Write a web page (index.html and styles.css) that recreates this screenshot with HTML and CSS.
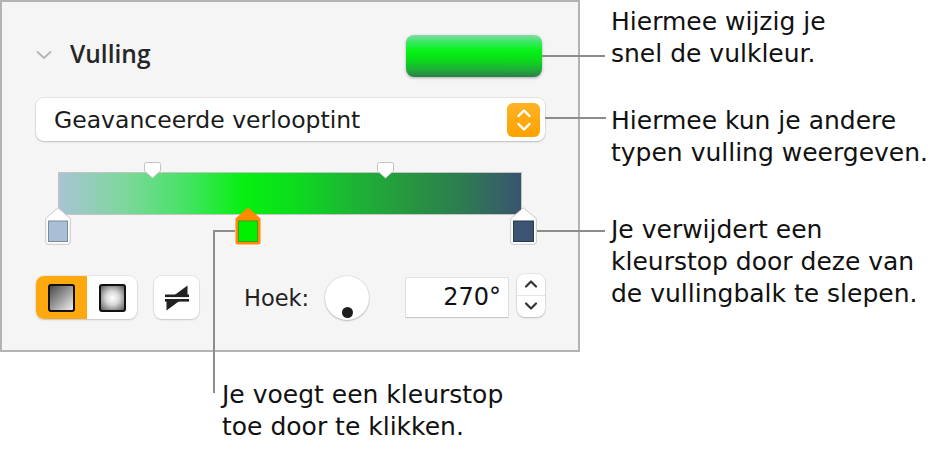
FILE: index.html
```html
<!DOCTYPE html>
<html lang="nl">
<head>
    <meta charset="UTF-8">
    <meta name="viewport" content="width=device-width, initial-scale=1.0">
    <title>Vulling</title>
    <link rel="stylesheet" href="styles.css">
</head>
<body>
    <div class="figure">
        <div class="top-row">
            <!-- Inspector panel -->
            <div class="panel">
                <div class="header">
                    <svg class="chev" width="16" height="10" viewBox="0 0 16 10"><polyline points="1.5,2 8,8 14.5,2" fill="none" stroke="#b5b5b5" stroke-width="1.8" stroke-linecap="round" stroke-linejoin="round"/></svg>
                    <span class="title">Vulling</span>
                    <div class="well"></div>
                </div>

                <div class="select">
                    <span class="select-label">Geavanceerde verlooptint</span>
                    <div class="popup">
                        <svg width="16" height="26" viewBox="0 0 16 26"><polyline points="2.5,9 8,3.5 13.5,9" fill="none" stroke="#fff" stroke-width="2.4" stroke-linecap="round" stroke-linejoin="round"/><polyline points="2.5,17 8,22.5 13.5,17" fill="none" stroke="#fff" stroke-width="2.4" stroke-linecap="round" stroke-linejoin="round"/></svg>
                    </div>
                </div>

                <div class="ramp">
                    <div class="bar"></div>
                    <svg class="mid mid-a" width="17" height="17" viewBox="0 0 17 17"><path d="M2.5 0.5 H14.5 Q16.5 0.5 16.5 2.5 V9 L8.5 16 L0.5 9 V2.5 Q0.5 0.5 2.5 0.5 Z" fill="#fff" stroke="#c2c2c2"/></svg>
                    <svg class="mid mid-b" width="17" height="17" viewBox="0 0 17 17"><path d="M2.5 0.5 H14.5 Q16.5 0.5 16.5 2.5 V9 L8.5 16 L0.5 9 V2.5 Q0.5 0.5 2.5 0.5 Z" fill="#fff" stroke="#c2c2c2"/></svg>

                    <svg class="stop stop-left" width="26" height="38" viewBox="0 0 26 38"><path d="M13 0.8 L25.3 11.5 V35 Q25.3 37.3 23 37.3 H3 Q0.7 37.3 0.7 35 V11.5 Z" fill="#fff" stroke="#c9c9c9"/><rect x="3.5" y="14" width="19" height="20.5" fill="#a9bfd6" stroke="#7d8a99"/></svg>
                    <svg class="stop stop-green" width="26" height="38" viewBox="0 0 26 38"><path d="M13 0.5 L25.5 11.5 V35 Q25.5 37.5 23 37.5 H3 Q0.5 37.5 0.5 35 V11.5 Z" fill="#ff8c00"/><rect x="3.5" y="14" width="19" height="20.5" fill="#00f000" stroke="#38a020"/></svg>
                    <svg class="stop stop-right" width="27" height="38" viewBox="0 0 27 38"><path d="M13.5 0.8 L26.3 11.5 V35 Q26.3 37.3 24 37.3 H3 Q0.7 37.3 0.7 35 V11.5 Z" fill="#fff" stroke="#c9c9c9"/><rect x="3.5" y="14" width="20" height="20.5" fill="#3a5472" stroke="#2a3a50"/></svg>
                </div>

                <div class="controls">
                    <div class="segmented">
                        <div class="segment active">
                            <span class="grad-icon linear"></span>
                        </div>
                        <div class="segment">
                            <span class="grad-icon radial"></span>
                        </div>
                    </div>
                    <div class="swap">
                        <svg width="24" height="26" viewBox="0 0 24 26"><rect x="0" y="9.5" width="24" height="2.6" fill="#222"/><polygon points="9,10.5 22.5,0.5 22.5,10.5" fill="#222"/><rect x="0" y="14" width="24" height="2.6" fill="#222"/><polygon points="1.5,15.5 15,15.5 1.5,25.5" fill="#222"/></svg>
                    </div>
                    <span class="angle-label">Hoek:</span>
                    <div class="dial"><span class="dial-dot"></span></div>
                    <div class="angle-input">270°</div>
                    <div class="stepper">
                        <div class="step">
                            <svg width="14" height="10" viewBox="0 0 14 10"><polyline points="2,7.5 7,2.5 12,7.5" fill="none" stroke="#333" stroke-width="2.2" stroke-linecap="round" stroke-linejoin="round"/></svg>
                        </div>
                        <div class="step">
                            <svg width="14" height="10" viewBox="0 0 14 10"><polyline points="2,2.5 7,7.5 12,2.5" fill="none" stroke="#333" stroke-width="2.2" stroke-linecap="round" stroke-linejoin="round"/></svg>
                        </div>
                    </div>
                </div>
            </div>

            <!-- Callouts on the right -->
            <div class="notes">
                <p class="note note-well">Hiermee wijzig je<br>snel de vulkleur.</p>
                <p class="note note-menu">Hiermee kun je andere<br>typen vulling weergeven.</p>
                <p class="note note-remove">Je verwijdert een<br>kleurstop door deze van<br>de vullingbalk te slepen.</p>
            </div>
        </div>

        <p class="note note-add">Je voegt een kleurstop<br>toe door te klikken.</p>
    </div>
</body>
</html>
```

FILE: styles.css
```css
body {
    margin: 0;
    background: #fff;
    font-family: "DejaVu Sans", sans-serif;
    color: #1a1a1a;
}
.figure {
    width: 945px;
    height: 457px;
    display: flex;
    flex-direction: column;
    overflow: hidden;
}
.top-row {
    display: flex;
}
.panel {
    box-sizing: border-box;
    width: 580px;
    height: 352px;
    border: 2px solid #b3b3b3;
    background: #f5f5f5;
    padding: 33px 33px 0 34px;
    flex-shrink: 0;
}

/* header */
.header {
    display: flex;
    align-items: center;
    height: 42px;
}
.chev {
    margin-bottom: 2px;
}
.title {
    margin-left: 18px;
    margin-bottom: 5px;
    font-family: "Open Sans", "Liberation Sans", sans-serif;
    font-weight: 600;
    font-size: 24.5px;
    color: #262626;
}
.well {
    margin-left: auto;
    margin-right: 3px;
    width: 136px;
    height: 42px;
    border-radius: 8px;
    background: linear-gradient(to bottom, #86d8a6 0%, #3ae866 16%, #05f414 38%, #0bd81d 62%, #1fae37 82%, #2a7f4c 100%);
    box-shadow: 0 1px 3px rgba(0, 0, 0, 0.3);
}

/* popup menu */
.select {
    margin-top: 21px;
    height: 43px;
    display: flex;
    align-items: center;
    background: #fff;
    border-radius: 8px;
    padding: 0 5px 0 18px;
    box-shadow: 0 0 0 1px rgba(0, 0, 0, 0.06), 0 1px 2px rgba(0, 0, 0, 0.18);
}
.select-label {
    flex: 1;
    font-size: 23.5px;
    color: #1a1a1a;
}
.popup {
    width: 33px;
    height: 34px;
    border-radius: 6px;
    background: linear-gradient(to bottom, #ffb225, #ffa200);
    display: flex;
    align-items: center;
    justify-content: center;
}

/* gradient bar */
.ramp {
    position: relative;
    margin-top: 19px;
    padding-top: 12px;
    height: 74px;
}
.bar {
    box-sizing: border-box;
    margin-left: 22px;
    width: 464px;
    height: 43px;
    border: 1px solid #c4c4c4;
    background: linear-gradient(to right, #a9c3d5 0%, #7ed79d 14%, #48e267 27%, #06f011 40%, #0cdc1d 51%, #1cb634 63%, #26983f 75%, #2d7c50 87%, #3a5470 100%);
}
.mid {
    position: absolute;
    top: 2px;
}
.mid-a {
    left: 108px;
}
.mid-b {
    left: 341px;
}
.stop {
    position: absolute;
    top: 47px;
}
.stop-left {
    left: 9px;
}
.stop-green {
    left: 199px;
}
.stop-right {
    left: 474px;
}

/* bottom controls */
.controls {
    display: flex;
    align-items: center;
    margin-top: 30px;
    height: 43px;
}
.segmented {
    display: flex;
    width: 101px;
    height: 43px;
    border-radius: 8px;
    background: #fff;
    box-shadow: 0 0 0 1px rgba(0, 0, 0, 0.05), 0 1px 2px rgba(0, 0, 0, 0.15);
    overflow: hidden;
}
.segment {
    width: 50px;
    display: flex;
    align-items: center;
    justify-content: center;
}
.segment.active {
    width: 52px;
    background: #ffa90f;
}
.grad-icon {
    box-sizing: border-box;
    width: 27px;
    height: 28px;
    border: 2.5px solid #111;
    border-radius: 3px;
}
.grad-icon.linear {
    background: linear-gradient(135deg, #4a4a4a, #9a9a9a 50%, #f0f0f0);
}
.grad-icon.radial {
    background: radial-gradient(circle at 50% 50%, #fff 0%, #d8d8d8 40%, #5a5a5a 100%);
}
.swap {
    margin-left: 17px;
    width: 45px;
    height: 43px;
    border-radius: 8px;
    background: #fff;
    box-shadow: 0 0 0 1px rgba(0, 0, 0, 0.05), 0 1px 2px rgba(0, 0, 0, 0.15);
    display: flex;
    align-items: center;
    justify-content: center;
}
.angle-label {
    margin-left: 45px;
    font-size: 22.5px;
    color: #222;
}
.dial {
    position: relative;
    margin-left: 16px;
    width: 44px;
    height: 44px;
    border-radius: 50%;
    background: #fff;
    box-shadow: 0 0 0 1px rgba(0, 0, 0, 0.06), 0 1px 2px rgba(0, 0, 0, 0.2);
}
.dial-dot {
    position: absolute;
    left: 17px;
    top: 31px;
    width: 11px;
    height: 11px;
    border-radius: 50%;
    background: #1c1c1c;
}
.angle-input {
    box-sizing: border-box;
    margin-left: auto;
    width: 102px;
    height: 39px;
    padding-right: 7px;
    background: #fff;
    box-shadow: 0 0 0 1px rgba(0, 0, 0, 0.07), 0 1px 1px rgba(0, 0, 0, 0.12);
    text-align: right;
    font-size: 24px;
    line-height: 39px;
    color: #111;
}
.stepper {
    margin-left: 9px;
    width: 28px;
    height: 43px;
    margin-top: -5px;
    border-radius: 8px;
    background: #fff;
    box-shadow: 0 0 0 1px rgba(0, 0, 0, 0.06), 0 1px 2px rgba(0, 0, 0, 0.18);
    display: flex;
    flex-direction: column;
}
.step {
    flex: 1;
    display: flex;
    align-items: center;
    justify-content: center;
}
.step + .step {
    border-top: 1px solid #e4e4e4;
}

/* callouts */
.notes {
    margin-left: 31px;
    padding-top: 6px;
}
.note {
    position: relative;
    margin: 0;
    font-size: 25px;
    line-height: 32px;
    color: #111;
    white-space: nowrap;
}
.note::before,
.note::after {
    content: "";
    position: absolute;
    background: #8c8c8c;
}
.note-well::before {
    left: -69px;
    top: 49px;
    width: 63px;
    height: 2px;
}
.note-menu {
    margin-top: 35px;
}
.note-menu::before {
    left: -66px;
    top: 12px;
    width: 61px;
    height: 2px;
}
.note-remove {
    margin-top: 45px;
}
.note-remove::before {
    left: -74px;
    top: 16px;
    width: 68px;
    height: 2px;
}
.note-add {
    margin: 27px 0 0 222px;
}
.note-add::before {
    left: -9px;
    top: -149px;
    width: 2px;
    height: 163px;
}
.note-add::after {
    left: -8px;
    top: -149px;
    width: 21px;
    height: 2px;
}
```
